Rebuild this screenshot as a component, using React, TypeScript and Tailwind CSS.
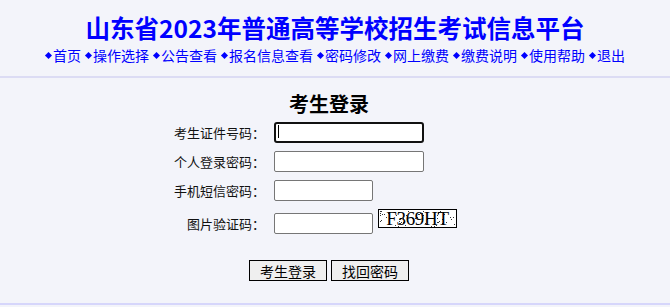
import React from "react";

const NAV = ["首页", "操作选择", "公告查看", "报名信息查看", "密码修改", "网上缴费", "缴费说明", "使用帮助", "退出"];

// fixed noise for the captcha picture
const DOTS: [number, number][] = Array.from({ length: 70 }, (_, i) => {
  const x = (i * 37 + (i * i) % 13) % 77;
  const y = (i * 11 + (i * 7) % 5) % 17;
  return [x + 1, y + 1];
});

function Captcha() {
  return (
    <div className="relative ml-[5px] w-[79px] h-[19px] border border-black bg-white">
      <svg className="absolute inset-0" width="77" height="17">
        {DOTS.map(([x, y], i) => (
          <rect key={i} x={x} y={y} width="1" height="1" fill="#333" />
        ))}
      </svg>
      <div className="relative text-center text-[19px] leading-[17px] text-black tracking-[-0.3px] font-['Liberation_Serif',serif]">
        F369HT
      </div>
    </div>
  );
}

function Row({ label, children }: { label: string; children: React.ReactNode }) {
  return (
    <div className="flex items-center h-[21px]">
      <div className="w-[265px] text-right text-[13px] text-[#111]">{label}</div>
      <div className="ml-[9px] flex items-center">{children}</div>
    </div>
  );
}

export default function App() {
  return (
    <div className="w-[670px] h-[307px] bg-[#f3f4fa] overflow-hidden font-['Noto_Sans_CJK_SC',sans-serif]">
      <div className="pt-[11px] h-[78px] border-b-[2px] border-[#dcdcf4]">
        <h1 className="text-center text-[24.5px] font-bold leading-[33px] text-[#0000ff]">
          山东省2023年普通高等学校招生考试信息平台
        </h1>
        <div className="flex justify-center gap-[4px] text-[14px] leading-[18px] text-[#0000ff] mt-[2px]">
          {NAV.map((n) => (
            <span key={n} className="flex items-center">
              <span className="inline-block w-[5px] h-[5px] rotate-45 bg-[#0000ff] mr-[2px] ml-[1px]" />
              {n}
            </span>
          ))}
        </div>
      </div>

      <div className="h-[227px] border-b-[2px] border-[#d6d6fb]">
        <div className="w-[658px] text-center text-[20px] font-bold leading-[28px] text-black pt-[12px]">考生登录</div>
        <div className="flex flex-col gap-[8px] mt-[4px]">
          <Row label="考生证件号码：">
            <div className="relative">
              <input className="w-[150px] h-[21px] bg-white border-2 border-[#111] rounded-[3px] outline-none" />
              <span className="absolute left-[4px] top-[4px] w-[1px] h-[13px] bg-black" />
            </div>
          </Row>
          <Row label="个人登录密码：">
            <input type="password" className="w-[150px] h-[21px] bg-white border border-[#767676] rounded-[2px] outline-none" />
          </Row>
          <Row label="手机短信密码：">
            <input className="w-[99px] h-[21px] bg-white border border-[#767676] rounded-[2px] outline-none" />
          </Row>
          <div className="flex items-start h-[25px]">
            <div className="w-[265px] mt-[4px] h-[21px] leading-[21px] text-right text-[13px] text-[#111]">图片验证码：</div>
            <input className="ml-[9px] mt-[4px] w-[99px] h-[21px] bg-white border border-[#767676] rounded-[2px] outline-none" />
            <Captcha />
          </div>
        </div>
        <div className="w-[658px] flex justify-center gap-[4px] mt-[26px]">
          <button className="w-[78px] h-[21px] border border-black bg-[#efefef] text-[14px] leading-[17px] pt-[2px] text-black">
            考生登录
          </button>
          <button className="w-[78px] h-[21px] border border-black bg-[#efefef] text-[14px] leading-[17px] pt-[2px] text-black">
            找回密码
          </button>
        </div>
      </div>
    </div>
  );
}
